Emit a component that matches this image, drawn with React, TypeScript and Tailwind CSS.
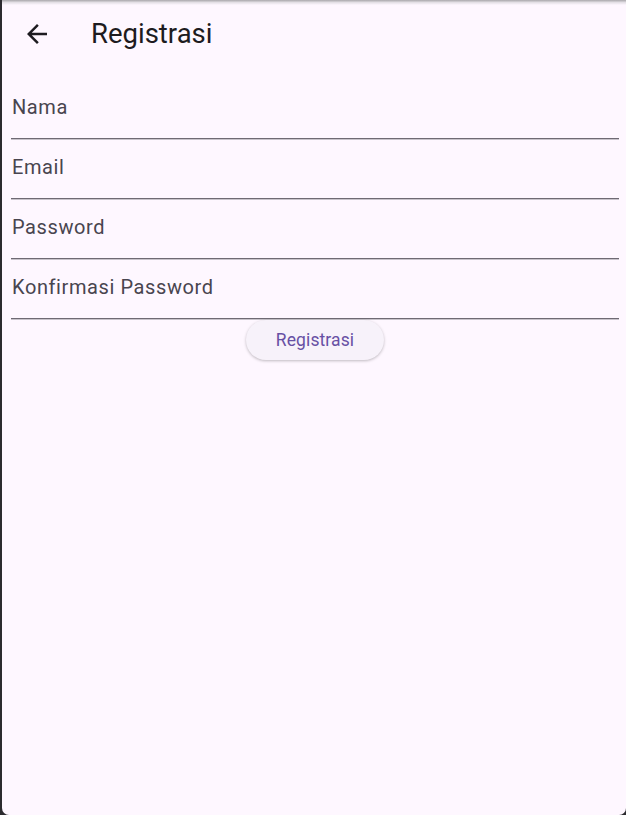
import { useState } from 'react';

const fields = ['Nama', 'Email', 'Password', 'Konfirmasi Password'];

function BackArrow() {
    return (
        <svg width="30" height="30" viewBox="0 0 24 24" className="fill-[#1d1b20]">
            <path d="M20 11H7.83l5.59-5.59L12 4l-8 8 8 8 1.41-1.41L7.83 13H20v-2z" />
        </svg>
    );
}

export default function App() {
    const [values, setValues] = useState<Record<string, string>>({});

    return (
        <div className="w-[626px] h-[815px] bg-[#2c2b2f] pl-[2px] overflow-hidden" style={{ fontFamily: 'Roboto, "Noto Sans", sans-serif' }}>
            <div className="relative h-full bg-[#fef7ff] rounded-b-[7px] flex flex-col">
                {/* window shadow on top */}
                <div className="absolute top-0 left-0 right-0 h-[5px] bg-gradient-to-b from-[#a9a7ab] via-[#e4e0e6] to-transparent" />

                {/* app bar */}
                <div className="h-[68px] flex items-center shrink-0">
                    <button className="w-[70px] h-[68px] flex items-center justify-center">
                        <BackArrow />
                    </button>
                    <h1 className="ml-[19px] text-[27.5px] leading-[32px] text-[#1d1b20] font-normal">Registrasi</h1>
                </div>

                {/* form */}
                <div className="pl-[9px] pr-[7px] pt-[11px] flex flex-col">
                    {fields.map((f) => (
                        <label key={f} className="h-[60px] flex items-center border-b border-[#6f6a74] shadow-[0_1px_0_#c8c3cb]">
                            <input
                                type={f.includes('Password') ? 'password' : 'text'}
                                placeholder={f}
                                value={values[f] ?? ''}
                                onChange={(e) => setValues({ ...values, [f]: e.target.value })}
                                className="w-full bg-transparent outline-none pl-px pb-[3px] text-[20px] leading-[24px] tracking-[0.6px] text-[#1d1b20] placeholder:text-[#49454f]"
                            />
                        </label>
                    ))}
                    <div className="flex justify-center pt-[1px]">
                        <button className="w-[138px] h-[40px] rounded-full bg-[#f7f2fa] text-[#6750a4] text-[17.5px] font-normal tracking-[0.1px] shadow-[0_1px_3px_rgba(0,0,0,0.25)]">
                            Registrasi
                        </button>
                    </div>
                </div>
            </div>
        </div>
    );
}
